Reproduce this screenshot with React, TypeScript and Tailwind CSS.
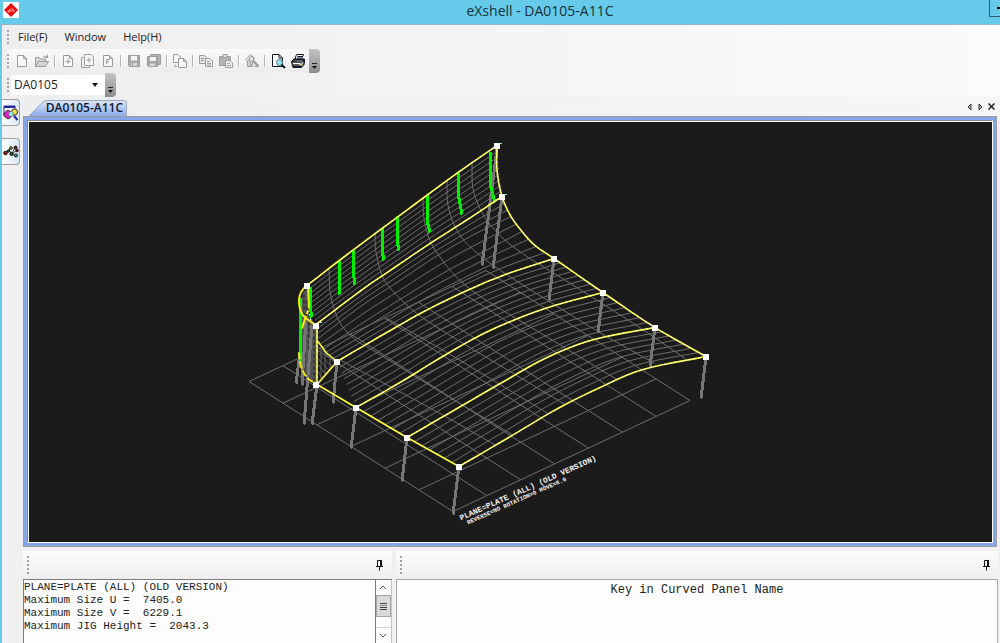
import type { ReactNode } from "react";
import clsx from "clsx";

type Point = [number, number];

/* ---------- Panel geometry ---------- */

// Frame lines of the curved plate, listed from the upper edge to the lower one
const FRAMES: Point[][] = [
  [[307, 285], [338, 261], [382, 228], [428, 194], [458, 172], [497, 145]],
  [[316, 324], [361, 290], [396, 266], [430, 243], [466, 220], [502, 196]],
  [[337, 361], [385, 333], [424, 311], [467, 290], [508, 273], [554, 258]],
  [[356, 407], [400, 382], [446, 354], [490, 330], [545, 308], [603, 292]],
  [[407, 437], [457, 408], [502, 382], [547, 357], [594, 339], [655, 327]],
  [[459, 466], [507, 438], [556, 409], [598, 388], [643, 369], [706, 356]],
];

// Guides that keep the mesh inside the bend between the second and third frame
const BEND: Point[][] = [
  [[318, 338], [362, 305], [400, 280], [436, 256], [474, 234], [511, 216]],
  [[323, 349], [368, 319], [408, 294], [446, 271], [484, 251], [522, 231]],
  [[329, 355], [376, 327], [416, 303], [457, 281], [496, 262], [536, 246]],
];

const RIGHT_EDGE: Point[] = [[497, 145], [497, 170], [502, 196], [511, 216], [522, 231], [535, 245], [554, 258], [603, 292], [655, 327], [706, 356]];

// Section curves that run down the plate
const SECTIONS: Point[][] = [
  [[329, 268], [330, 290], [334, 308], [341, 324], [355, 339], [373, 350], [440, 391], [512, 434]],
  [[375, 233], [376, 252], [383, 277], [396, 294], [417, 313], [450, 335], [510, 371], [565, 404]],
  [[423, 197], [424, 218], [430, 240], [441, 258], [457, 277], [482, 297], [548, 337], [617, 379]],
  [[447, 180], [448, 205], [457, 230], [473, 249], [502, 271], [551, 302], [603, 334], [655, 363]],
  [[472, 162], [473, 188], [482, 212], [499, 234], [524, 254], [572, 284], [632, 322], [685, 358]],
  [[341, 360], [390, 386], [440, 413], [496, 445]],
  [[387, 318], [440, 348], [495, 381], [548, 413]],
];

const POSTS: [Point, Point][] = [
  [[497, 148], [482, 265]],
  [[502, 196], [493, 268]],
  [[554, 258], [549, 300]],
  [[603, 292], [598, 332]],
  [[655, 327], [650, 366]],
  [[706, 356], [701, 398]],
  [[459, 466], [453, 514]],
  [[407, 437], [402, 481]],
  [[356, 407], [351, 448]],
  [[337, 361], [333, 403]],
  [[317, 384], [312, 424]],
  [[312, 325], [304, 424]],
  [[306, 318], [302, 385]],
  [[300, 352], [296, 383]],
];

const MARKS: Point[][] = [
  [[310, 286], [310, 306], [312, 317]],
  [[339, 260], [339, 282], [340, 294]],
  [[353, 249], [353, 270], [355, 284]],
  [[382, 227], [382, 250], [384, 260]],
  [[397, 215], [397, 240], [399, 250]],
  [[427, 194], [427, 220], [430, 232]],
  [[458, 172], [459, 198], [462, 214]],
  [[490, 151], [490, 183], [495, 202]],
  [[300, 297], [300, 363]],
];

const NODES: Point[] = [
  [497, 145], [502, 196], [554, 258], [603, 292], [655, 327], [706, 356],
  [307, 285], [316, 325], [337, 361], [316, 384], [356, 407], [407, 437], [459, 466],
];

const mix = (a: Point, b: Point, t: number): Point => [a[0] + (b[0] - a[0]) * t, a[1] + (b[1] - a[1]) * t];

// Catmull-Rom between p1 and p2
function spline(p0: Point, p1: Point, p2: Point, p3: Point, t: number): Point {
  const axis = (i: 0 | 1) =>
    0.5 *
    (2 * p1[i] +
      (p2[i] - p0[i]) * t +
      (2 * p0[i] - 5 * p1[i] + 4 * p2[i] - p3[i]) * t * t +
      (3 * p1[i] - p0[i] - 3 * p2[i] + p3[i]) * t * t * t);
  return [axis(0), axis(1)];
}

function at(line: Point[], t: number): Point {
  const n = line.length - 1;
  const i = Math.min(Math.floor(t * n), n - 1);
  const p0 = line[i - 1] ?? mix(line[i + 1], line[i], 2);
  const p3 = line[i + 2] ?? mix(line[i], line[i + 1], 2);
  return spline(p0, line[i], line[i + 1], p3, t * n - i);
}

const sample = (line: Point[], steps = 30) => Array.from({ length: steps + 1 }, (_, i) => at(line, i / steps));
const toPoints = (line: Point[]) => line.map((p) => `${p[0].toFixed(1)},${p[1].toFixed(1)}`).join(" ");

// Fine lines between two neighbouring guides
const GUIDES = [FRAMES[0], FRAMES[1], ...BEND, ...FRAMES.slice(2)];
const MESH_COUNTS = [9, 3, 2, 2, 2, 8, 7, 7];
const meshLines = MESH_COUNTS.flatMap((count, k) =>
  Array.from({ length: count }, (_, j) =>
    Array.from({ length: 31 }, (_, i) => mix(at(GUIDES[k], i / 30), at(GUIDES[k + 1], i / 30), j / count)),
  ),
);

// Floor grid, 7 by 6 cells
const A: Point = [249, 381];
const B: Point = [453, 511];
const C: Point = [690, 400];
const D: Point = [486, 270];
const floorLines = [
  ...Array.from({ length: 8 }, (_, i) => [mix(A, D, i / 7), mix(B, C, i / 7)]),
  ...Array.from({ length: 7 }, (_, i) => [mix(A, B, i / 6), mix(D, C, i / 6)]),
];

function PanelDrawing() {
  return (
    <svg viewBox="29 122 963 419" className="block size-full" role="img" aria-label="Curved panel DA0105-A11C">
      <g fill="none" stroke="#6e6e6e" strokeWidth="1">
        {floorLines.map((line, i) => (
          <polyline key={i} points={toPoints(line)} />
        ))}
        {meshLines.map((line, i) => (
          <polyline key={i} points={toPoints(line)} />
        ))}
        {SECTIONS.map((line, i) => (
          <polyline key={i} points={toPoints(sample(line))} />
        ))}
      </g>

      {/* Rolled end on the left */}
      <path d="M303 292 308 287 309 315 316 325 316 384 307 376 301 362 301 305Z" fill="#626262" fillOpacity="0.8" />
      <path
        d="M304 294V314M307 300V316M305 324V368M309 322V376M314 330V380"
        stroke="#1b1b1b"
        strokeWidth="1"
        strokeDasharray="3 3"
      />
      <path
        d="M318 346 335 362M318 352 332 366M318 358 329 370M318 364 326 374M318 371 322 378M321 348V378M325 353V374M330 358V368"
        stroke="#646464"
        strokeWidth="1"
      />

      <g stroke="#767676" strokeWidth="3" shapeRendering="crispEdges">
        {POSTS.map(([a, b], i) => (
          <line key={i} x1={a[0]} y1={a[1]} x2={b[0]} y2={b[1]} />
        ))}
      </g>

      <g fill="none" stroke="#00f000" strokeWidth="3" shapeRendering="crispEdges">
        {MARKS.map((line, i) => (
          <polyline key={i} points={toPoints(line)} />
        ))}
      </g>

      <g fill="none" stroke="#ffff3c" strokeWidth="1.6">
        {FRAMES.map((line, i) => (
          <polyline key={i} points={toPoints(sample(line))} />
        ))}
        <polyline points={toPoints(sample(RIGHT_EDGE))} />
        <polyline points="317,384 356,407 407,437 459,466" />
        <polyline points="317,325 317,384 337,361 326,352 318,341" />
        <path d="M307 285Q299 291 299 300Q299 312 305 317L316 325" stroke="#f6ee10" strokeWidth="2" />
        <path d="M308 286 309 308 305 318 302 328" stroke="#f6ee10" strokeWidth="2" strokeDasharray="22 2 4 2" />
        <path d="M299 352 300 362Q303 374 309 379L317 384" stroke="#f6ee10" strokeWidth="2" strokeDasharray="7 2" />
      </g>
      <g fill="none" stroke="#ffffff" strokeWidth="1" strokeDasharray="2 3">
        {FRAMES.map((line, i) => (
          <polyline key={i} points={toPoints(sample(line))} />
        ))}
        <polyline points={toPoints(sample(RIGHT_EDGE))} />
        <path d="M317 325V384M311 320 309 312" />
      </g>

      <g fill="#ffffff" shapeRendering="crispEdges">
        {NODES.map(([x, y]) => (
          <rect key={`${x}-${y}`} x={x - 3} y={y - 3} width="6" height="6" />
        ))}
      </g>
      <path d="M499 143h3M504 194h3M319 322h3" stroke="#9fe6e6" />

      <g fill="#f2f2f2" className="font-['Liberation_Mono',monospace] font-bold">
        <text transform="translate(461 520) rotate(-24)" fontSize="8">
          PLANE=PLATE (ALL) (OLD VERSION)
        </text>
        <text transform="translate(468 524) rotate(-24)" fontSize="6">
          REVERSE=NO ROTATION=0 MOVE=0.0
        </text>
      </g>
    </svg>
  );
}

/* ---------- Icons ---------- */

function Icon({ children, className }: { children: ReactNode; className?: string }) {
  return (
    <svg viewBox="0 0 16 16" className={clsx("size-4", className)} fill="none" stroke="currentColor" strokeWidth="1" aria-hidden="true">
      {children}
    </svg>
  );
}

const PAGE = "M3.5 2.5H9.5L12.5 5.5V13.5H3.5ZM9.5 2.5V5.5H12.5";

const icons = {
  blank: (
    <Icon>
      <path d={PAGE} fill="#f8f8f8" />
    </Icon>
  ),
  open: (
    <Icon>
      <path d="M1.5 13.5V4.5H5L6.5 6H11.5V8M1.5 13.5 4.5 8.5H14.5L11.5 13.5Z" fill="#d4d4d4" />
      <path d="M9 4.5Q11 1.5 13.5 4M13.5 1.5V4.5H11" />
    </Icon>
  ),
  add: (
    <Icon>
      <path d={PAGE} fill="#f8f8f8" />
      <path d="M8 6V11M5.5 8.5H10.5" />
    </Icon>
  ),
  addMany: (
    <Icon>
      <path d="M3.5 4.5H1.5V14.5H9.5V13" />
      <path d="M4.5 1.5H11L13.5 4V12.5H4.5Z" fill="#f8f8f8" />
      <path d="M9 4.5V9.5M6.5 7H11.5" />
    </Icon>
  ),
  format: (
    <Icon>
      <path d={PAGE} fill="#f8f8f8" />
      <path d="M6.5 11.5V6.5H9.5M6.5 9H9" />
    </Icon>
  ),
  save: (
    <Icon>
      <path d="M2.5 2.5H13.5V13.5H3.5L2.5 12.5Z" fill="#a8a8a8" />
      <path d="M5 3H11V7.5H5Z" fill="#f4f4f4" stroke="none" />
      <path d="M5 10H11V13H5Z" fill="#d8d8d8" stroke="none" />
      <path d="M6.5 10V13" />
    </Icon>
  ),
  saveAll: (
    <Icon>
      <path d="M4.5 1.5H14.5V11.5H4.5Z" fill="#b4b4b4" />
      <path d="M1.5 3.5H11.5V13.5H2.5L1.5 12.5Z" fill="#a8a8a8" />
      <path d="M4 4H10V8H4Z" fill="#f4f4f4" stroke="none" />
      <path d="M4 10.5H9V13H4Z" fill="#d8d8d8" stroke="none" />
    </Icon>
  ),
  duplicate: (
    <Icon>
      <path d="M1.5 1.5H6L8.5 4V9.5H1.5Z" fill="#f8f8f8" />
      <path d="M6.5 5.5H11.5L14.5 8.5V14.5H6.5ZM11.5 5.5V8.5H14.5" fill="#f8f8f8" />
      <path d="M3 11.5V13.5H5" />
    </Icon>
  ),
  copy: (
    <Icon>
      <path d="M1.5 2.5H6.5L8.5 4.5V10.5H1.5Z" fill="#e4e4e4" />
      <path d="M3 5.5H6M3 7.5H6" />
      <path d="M7.5 5.5H12L14.5 8V13.5H7.5Z" fill="#f0f0f0" />
      <path d="M9 8.5H12M9 10.5H13M9 12H13" />
    </Icon>
  ),
  paste: (
    <Icon>
      <path d="M1.5 3.5H12.5V12.5H1.5Z" fill="#b4b4b4" />
      <path d="M5 1.5H9V4.5H5Z" fill="#e4e4e4" />
      <path d="M7.5 7.5H12L14.5 10V14.5H7.5Z" fill="#f0f0f0" />
      <path d="M9 10.5H12M9 12.5H13" />
    </Icon>
  ),
  find: (
    <Icon>
      <path d="M2 7.5V6L6.5 1.5 11 6" />
      <path d="M3.5 7.5H8.5V13.5H3.5Z" fill="#d8d8d8" />
      <path d="M5 10H7M5 12H8" />
      <circle cx="7.5" cy="6" r="2.5" fill="#e0e0e0" />
      <path d="M9.5 8 14 13" strokeWidth="2.5" />
      <path d="M10 13.5H15" />
    </Icon>
  ),
  preview: (
    <Icon className="text-gray-900">
      <path d="M2.5 1.5H9L12.5 5V13.5H2.5Z" fill="#ffffff" />
      <path d="M9 1.5V5H12.5" />
      <circle cx="9.5" cy="9.5" r="3" fill="#8fe3ec" stroke="#5b7a7e" />
      <path d="M11.5 11.5 15 15" strokeWidth="2" />
    </Icon>
  ),
  print: (
    <Icon className="text-gray-900">
      <path d="M5 6 6.5 1.5H13.5L11.5 6" fill="#ffffff" />
      <path d="M7.5 3.5H12M7 5H11" />
      <path d="M1.5 8.5 4 6H14.5V10L12 13.5H2.5Z" fill="#606060" />
      <path d="M2 8.5H12V13M3 10.5H10.5" stroke="#ffffff" />
      <path d="M2 8.5 4 6.5H14.5L12 9ZM3 12.5V14.5H11.5L14.5 11" />
      <path d="M9 11.5H11" stroke="#e8dc3c" />
    </Icon>
  ),
};

const toolGroups: { label: string; icon: ReactNode; enabled?: boolean }[][] = [
  [
    { label: "New", icon: icons.blank },
    { label: "Open", icon: icons.open },
  ],
  [
    { label: "Add panel", icon: icons.add },
    { label: "Add panels", icon: icons.addMany },
    { label: "Format", icon: icons.format },
  ],
  [
    { label: "Save", icon: icons.save },
    { label: "Save all", icon: icons.saveAll },
  ],
  [{ label: "Duplicate", icon: icons.duplicate }],
  [
    { label: "Copy", icon: icons.copy },
    { label: "Paste", icon: icons.paste },
  ],
  [{ label: "Find", icon: icons.find }],
  [
    { label: "Print preview", icon: icons.preview, enabled: true },
    { label: "Print", icon: icons.print, enabled: true },
  ],
];

function Grip({ className }: { className?: string }) {
  return <div className={clsx("w-0.5 shrink-0 bg-[repeating-linear-gradient(#a3a3a3_0_2px,transparent_2px_4px)]", className)} />;
}

function Overflow({ label }: { label: string }) {
  return (
    <button type="button" aria-label={label} className="flex h-6 w-[11px] items-end justify-center rounded-r-sm bg-gradient-to-b from-[#c4c4c4] to-[#8e8e8e] pb-1">
      <svg viewBox="0 0 7 6" className="h-1.5 w-[7px]" aria-hidden="true">
        <path d="M1 0H6V1H1Z" fill="#222222" />
        <path d="M1 3H6L3.5 6Z" fill="#111111" />
      </svg>
    </button>
  );
}

function PinButton({ label }: { label: string }) {
  return (
    <button type="button" aria-label={label} className="flex size-4 items-center justify-center">
      <svg viewBox="0 0 9 12" className="h-3 w-[9px]" aria-hidden="true">
        <path d="M2.5 7.5V1.5H6.5V7.5M1 7.5H8M4.5 7.5V11.5" fill="none" stroke="#111111" />
        <path d="M5 1H7V8H5Z" fill="#111111" />
      </svg>
    </button>
  );
}

function PanelHeader({ pinLabel }: { pinLabel: string }) {
  return (
    <div className="flex h-7 shrink-0 items-center justify-between bg-gradient-to-b from-[#fcfcfc] to-[#eeeeee] pr-1 pl-1">
      <Grip className="h-[18px]" />
      <PinButton label={pinLabel} />
    </div>
  );
}

/* ---------- Window ---------- */

function TitleBar() {
  return (
    <header className="relative flex h-[25px] shrink-0 items-center justify-center border-b border-[#8fb9c9] bg-[#66cbea] pb-0.5">
      <svg viewBox="0 0 16 16" className="absolute top-0.5 left-[3px] size-4" aria-hidden="true">
        <rect width="16" height="16" fill="#ffffff" />
        <path d="M8 1 15 8 8 15 1 8Z" fill="#f00808" />
        <path d="M5 8.5H7V6.5M5 8.5V10H7V8M9 5.5V10M9 8H11V10" fill="none" stroke="#ff9d9d" />
      </svg>
      <h1 className="pl-20 text-[14px] leading-5 text-[#17303a]">eXshell - DA0105-A11C</h1>
      <button type="button" aria-label="Minimize" className="absolute top-0 right-0 h-[17px] w-[11px] border-b border-l border-[#2f5a6a]">
        <span className="absolute top-[7px] right-0 h-0.5 w-[3px] bg-black" />
      </button>
    </header>
  );
}

function Toolbars() {
  return (
    <div className="shrink-0 bg-gradient-to-r from-[#eeeeee] to-[#fbfbfb] pl-[5px]">
      <nav className="flex h-6 items-center gap-[17px]" aria-label="Main menu">
        <Grip className="-mr-2 h-3.5" />
        {["File(F)", "Window", "Help(H)"].map((item) => (
          <button key={item} type="button" className="text-[11px] leading-4 text-[#222222]">
            {item}
          </button>
        ))}
      </nav>

      <div className="flex h-6 items-center gap-px">
        <div className="flex h-6 items-center rounded-sm bg-gradient-to-b from-[#fafafa] to-[#ececec]">
          <Grip className="mr-[3px] h-3.5" />
          {toolGroups.map((group, i) => (
            <div key={i} className="flex items-center">
              {i > 0 && <div className="mx-0.5 h-3 w-0.5 border-l border-[#b4b4b4] bg-white" />}
              {group.map((tool) => (
                <button
                  key={tool.label}
                  type="button"
                  aria-label={tool.label}
                  disabled={!tool.enabled}
                  className="flex size-5 items-center justify-center text-[#9c9c9c]"
                >
                  {tool.icon}
                </button>
              ))}
            </div>
          ))}
        </div>
        <Overflow label="Toolbar options" />
      </div>

      <div className="flex h-6 items-center">
        <Grip className="mr-0.5 h-3.5" />
        <div className="relative">
          <select aria-label="Project" className="block h-5 w-[94px] appearance-none bg-white pl-[3px] text-[12px] leading-4 text-[#222222]">
            <option>DA0105</option>
          </select>
          <svg viewBox="0 0 6 4" className="pointer-events-none absolute top-2 right-[7px] h-1 w-1.5" aria-hidden="true">
            <path d="M0 0H6L3 4Z" fill="#111111" />
          </svg>
        </div>
        <Overflow label="Project bar options" />
      </div>
    </div>
  );
}

function SideBar() {
  return (
    <aside className="flex w-[21px] shrink-0 flex-col gap-3 bg-[#f0f0f0] pt-0.5">
      <button type="button" aria-label="Panel view" className="flex h-[27px] w-[18px] items-center justify-center rounded-r-sm border border-l-0 border-[#a0a0a0] bg-gradient-to-r from-white to-[#dbe6f4]">
        <svg viewBox="0 0 16 16" className="size-4" aria-hidden="true">
          <path d="M1 1H12V10H1Z" fill="#ffffff" stroke="#26269a" />
          <path d="M1 1H12V3H1Z" fill="#26269a" />
          <circle cx="11.5" cy="7" r="3" fill="#f0e83c" stroke="#333333" />
          <path d="M1 8 5 5 8 7V12L5 14 1 11Z" fill="#e21cd0" stroke="#333333" />
          <circle cx="8" cy="9" r="2.5" fill="#9de6ea" stroke="#555555" strokeWidth="0.5" />
          <path d="M11 11 14.5 15" stroke="#26269a" strokeWidth="2" />
        </svg>
      </button>
      <button type="button" aria-label="Node view" className="flex h-[27px] w-[18px] items-center justify-center rounded-r-sm border border-l-0 border-[#a0a0a0] bg-gradient-to-r from-white to-[#dbe6f4]">
        <svg viewBox="0 0 16 16" className="size-4" aria-hidden="true">
          <path d="M2 9 6 6 8 3M6 6 9 10 12 3M9 10 14 6M9 10 13 12" fill="none" stroke="#444444" />
          <g stroke="#111111">
            <circle cx="2.5" cy="9" r="1.8" fill="#b01414" />
            <circle cx="5.5" cy="7" r="1.2" fill="#1c6e1c" />
            <circle cx="8" cy="4" r="1.3" fill="#d8d81c" />
            <circle cx="12.5" cy="3.5" r="1.5" fill="#8c1414" />
            <circle cx="14" cy="6.5" r="1.3" fill="#b01414" />
            <circle cx="8.5" cy="10" r="1.6" fill="#1c6e1c" />
            <circle cx="13" cy="11.5" r="1.6" fill="#28b0b0" />
          </g>
        </svg>
      </button>
    </aside>
  );
}

function DocumentTabs() {
  return (
    <div className="flex h-[19px] shrink-0 items-end justify-between bg-gradient-to-r from-[#eeeeee] to-[#f6f6f6] pr-[3px]">
      <button type="button" className="relative ml-1.5 h-4 w-[98px] pr-1 text-right text-[12px] leading-4 font-semibold text-[#101a2c]">
        <svg viewBox="0 0 99 16" className="absolute inset-0 size-full" preserveAspectRatio="none" aria-hidden="true">
          <defs>
            <linearGradient id="tab" x1="0" y1="0" x2="0" y2="1">
              <stop offset="0" stopColor="#dde7fa" />
              <stop offset="1" stopColor="#8eaceb" />
            </linearGradient>
          </defs>
          <path d="M0 16 14 2Q16 .5 19 .5H96Q98.5 .5 98.5 3V16" fill="url(#tab)" stroke="#9aa6bb" />
        </svg>
        <span className="relative">DA0105-A11C</span>
      </button>
      <div className="flex items-center self-center">
        <button type="button" aria-label="Previous tab" className="flex h-3 w-[11px] items-center justify-center">
          <svg viewBox="0 0 5 8" className="h-2 w-[5px]" aria-hidden="true">
            <path d="M4 1V7L1 4Z" fill="#bbbbbb" stroke="#333333" />
          </svg>
        </button>
        <button type="button" aria-label="Next tab" className="flex h-3 w-[11px] items-center justify-center">
          <svg viewBox="0 0 5 8" className="h-2 w-[5px]" aria-hidden="true">
            <path d="M1 1V7L4 4Z" fill="#bbbbbb" stroke="#333333" />
          </svg>
        </button>
        <button type="button" aria-label="Close tab" className="flex h-3 w-[11px] items-center justify-center">
          <svg viewBox="0 0 7 7" className="size-[7px]" aria-hidden="true">
            <path d="M.5 .5 6.5 6.5M6.5 .5 .5 6.5" stroke="#222222" strokeWidth="1.5" />
          </svg>
        </button>
      </div>
    </div>
  );
}

function OutputPanel() {
  return (
    <section className="flex flex-col" aria-label="Output">
      <PanelHeader pinLabel="Pin output" />
      <div className="flex min-h-16 flex-1 border-t border-l border-[#7c7c7c] bg-[#fdfdfd]">
        <pre className="flex-1 overflow-hidden border-r border-[#7c7c7c] pt-px font-['Liberation_Mono',monospace] text-[11px] leading-[13px] text-[#222222]">
          {"PLANE=PLATE (ALL) (OLD VERSION)\nMaximum Size U =  7405.0\nMaximum Size V =  6229.1\nMaximum JIG Height =  2043.3"}
        </pre>
        <div className="flex w-4 flex-col border-r border-[#c4c4c4]">
          <button type="button" aria-label="Scroll up" className="flex h-[15px] items-center justify-center">
            <svg viewBox="0 0 8 5" className="h-[5px] w-2" aria-hidden="true">
              <path d="M1 4 4 1 7 4" fill="none" stroke="#555555" />
            </svg>
          </button>
          <div className="flex h-[22px] flex-col items-center justify-center gap-px border border-[#a8a8a8] bg-[#dadada]">
            <span className="h-px w-[7px] bg-[#444444]" />
            <span className="h-px w-[7px] bg-[#888888]" />
            <span className="h-px w-[7px] bg-[#444444]" />
            <span className="h-px w-[7px] bg-[#444444]" />
          </div>
          <div className="flex-1 border-b border-[#d4d4d4]" />
          <button type="button" aria-label="Scroll down" className="flex h-[15px] items-center justify-center">
            <svg viewBox="0 0 8 5" className="h-[5px] w-2" aria-hidden="true">
              <path d="M1 1 4 4 7 1" fill="none" stroke="#555555" />
            </svg>
          </button>
        </div>
      </div>
    </section>
  );
}

function PromptPanel() {
  return (
    <section className="flex flex-col" aria-label="Prompt">
      <PanelHeader pinLabel="Pin prompt" />
      <div className="min-h-16 flex-1 border-x border-t border-[#a8a8a8] bg-[#fdfdfd]">
        <p className="pt-0.5 text-center font-['Liberation_Mono',monospace] text-[12px] leading-4 text-[#222222]">Key in Curved Panel Name</p>
      </div>
    </section>
  );
}

export default function App() {
  return (
    <div className="flex h-screen flex-col overflow-hidden bg-[#f0f0f0] font-['Open_Sans',sans-serif]">
      <TitleBar />
      <div className="flex min-h-0 flex-1 flex-col border-l-2 border-[#66cbea]">
        <Toolbars />
        <div className="flex min-h-0 flex-1">
          <SideBar />
          <main className="flex min-w-0 flex-1 flex-col">
            <DocumentTabs />
            <div className="mr-[3px] min-h-0 flex-1 border border-[#9a9a9a] bg-[#86a4e8] p-[3px]">
              <div className="h-full border border-[#8a8a8a] border-r-white border-b-white bg-white pt-px pl-px">
                <div className="h-full bg-[#1b1b1b]">
                  <PanelDrawing />
                </div>
              </div>
            </div>
            <div className="mt-1 mr-0.5 grid shrink-0 grid-cols-[38fr_62fr] gap-1">
              <OutputPanel />
              <PromptPanel />
            </div>
          </main>
        </div>
      </div>
    </div>
  );
}
